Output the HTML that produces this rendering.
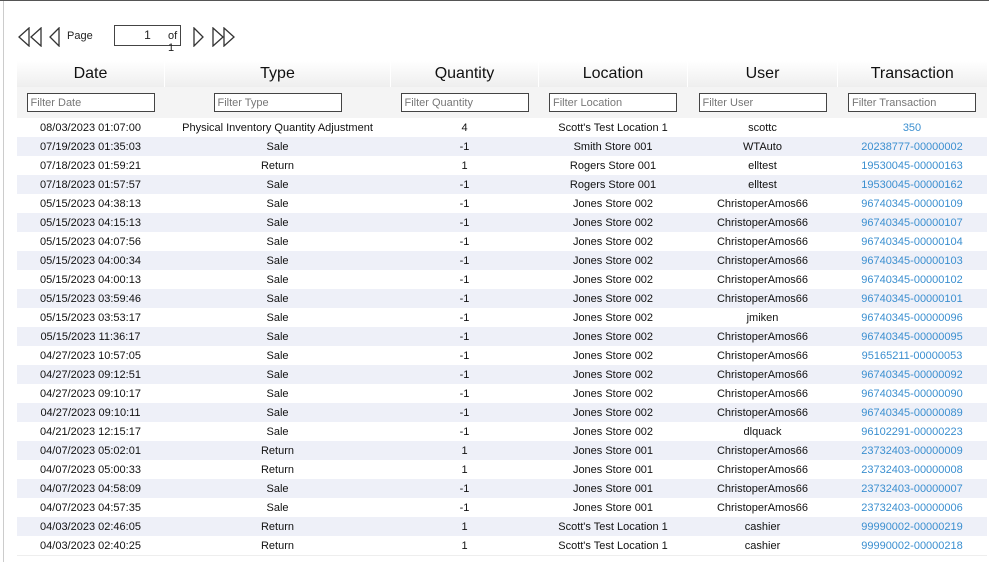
<!DOCTYPE html>
<html><head><style>
html,body{margin:0;padding:0;width:989px;height:562px;overflow:hidden;background:#fff;font-family:"Segoe UI","Liberation Sans",sans-serif;}
.topline{position:absolute;left:0;top:0;width:989px;height:1px;background:#555;}
.leftline{position:absolute;left:3px;top:1px;width:1px;height:561px;background:#ccc;}
.pager{position:absolute;left:18px;top:25px;height:22px;font-size:11px;color:#222;}
.pager svg{position:absolute;}
.pager .lbl{position:absolute;top:5px;}
.pager .box{position:absolute;left:96px;top:0;width:65px;height:19px;border:1px solid #444;text-align:center;font-size:12px;line-height:18px;}
table{position:absolute;left:16px;top:61px;width:970px;border-collapse:collapse;table-layout:fixed;font-size:11px;color:#111;}
th{font-weight:normal;font-size:16px;height:26px;padding:0;background:linear-gradient(#fff,#eee);border-left:1px solid #fff;}
tr.f td{height:31px;background:#f4f4f4;padding:0;text-align:center;}
.inp{display:inline-block;width:124px;height:19px;border:1px solid #444;background:#fff;text-align:left;font-size:11px;color:#777;line-height:19px;padding-left:3px;box-sizing:border-box;width:128px;}
td{text-align:center;height:19px;padding:0;white-space:nowrap;}
tbody tr.d:nth-child(odd) td{background:#eef0f8;}
td.t{color:#3b8fd0;}
tr.d:last-child td{border-bottom:1px solid #eee;}
</style></head><body>
<div class="topline"></div><div class="leftline"></div>
<div class="pager">
<svg style="left:0;top:2px" width="26" height="20" viewBox="0 0 26 20"><path d="M11 1 L1 10 L11 19 Z M23 1 L13 10 L23 19 Z" fill="none" stroke="#333" stroke-width="1.3"/></svg>
<svg style="left:30px;top:2px" width="14" height="20" viewBox="0 0 14 20"><path d="M11 1 L2 10 L11 19 Z" fill="none" stroke="#333" stroke-width="1.3"/></svg>
<span class="lbl" style="left:49px">Page</span>
<div class="box">1</div>
<span class="lbl" style="left:150px">of 1</span>
<svg style="left:174px;top:2px" width="14" height="20" viewBox="0 0 14 20"><path d="M2 1 L11 10 L2 19 Z" fill="none" stroke="#333" stroke-width="1.3"/></svg>
<svg style="left:193px;top:2px" width="26" height="20" viewBox="0 0 26 20"><path d="M2 1 L12 10 L2 19 Z M13 1 L23 10 L13 19 Z" fill="none" stroke="#333" stroke-width="1.3"/></svg>
</div>
<table>
<colgroup><col style="width:148px"><col style="width:226px"><col style="width:148px"><col style="width:149px"><col style="width:150px"><col style="width:149px"></colgroup>
<thead><tr><th>Date</th><th>Type</th><th>Quantity</th><th>Location</th><th>User</th><th>Transaction</th></tr></thead>
<tbody>
<tr class="f"><td><span class="inp">Filter Date</span></td><td><span class="inp">Filter Type</span></td><td><span class="inp">Filter Quantity</span></td><td><span class="inp">Filter Location</span></td><td><span class="inp">Filter User</span></td><td><span class="inp">Filter Transaction</span></td></tr>
<tr class="d"><td>08/03/2023 01:07:00</td><td>Physical Inventory Quantity Adjustment</td><td>4</td><td>Scott's Test Location 1</td><td>scottc</td><td class="t">350</td></tr>
<tr class="d"><td>07/19/2023 01:35:03</td><td>Sale</td><td>-1</td><td>Smith Store 001</td><td>WTAuto</td><td class="t">20238777-00000002</td></tr>
<tr class="d"><td>07/18/2023 01:59:21</td><td>Return</td><td>1</td><td>Rogers Store 001</td><td>elltest</td><td class="t">19530045-00000163</td></tr>
<tr class="d"><td>07/18/2023 01:57:57</td><td>Sale</td><td>-1</td><td>Rogers Store 001</td><td>elltest</td><td class="t">19530045-00000162</td></tr>
<tr class="d"><td>05/15/2023 04:38:13</td><td>Sale</td><td>-1</td><td>Jones Store 002</td><td>ChristoperAmos66</td><td class="t">96740345-00000109</td></tr>
<tr class="d"><td>05/15/2023 04:15:13</td><td>Sale</td><td>-1</td><td>Jones Store 002</td><td>ChristoperAmos66</td><td class="t">96740345-00000107</td></tr>
<tr class="d"><td>05/15/2023 04:07:56</td><td>Sale</td><td>-1</td><td>Jones Store 002</td><td>ChristoperAmos66</td><td class="t">96740345-00000104</td></tr>
<tr class="d"><td>05/15/2023 04:00:34</td><td>Sale</td><td>-1</td><td>Jones Store 002</td><td>ChristoperAmos66</td><td class="t">96740345-00000103</td></tr>
<tr class="d"><td>05/15/2023 04:00:13</td><td>Sale</td><td>-1</td><td>Jones Store 002</td><td>ChristoperAmos66</td><td class="t">96740345-00000102</td></tr>
<tr class="d"><td>05/15/2023 03:59:46</td><td>Sale</td><td>-1</td><td>Jones Store 002</td><td>ChristoperAmos66</td><td class="t">96740345-00000101</td></tr>
<tr class="d"><td>05/15/2023 03:53:17</td><td>Sale</td><td>-1</td><td>Jones Store 002</td><td>jmiken</td><td class="t">96740345-00000096</td></tr>
<tr class="d"><td>05/15/2023 11:36:17</td><td>Sale</td><td>-1</td><td>Jones Store 002</td><td>ChristoperAmos66</td><td class="t">96740345-00000095</td></tr>
<tr class="d"><td>04/27/2023 10:57:05</td><td>Sale</td><td>-1</td><td>Jones Store 002</td><td>ChristoperAmos66</td><td class="t">95165211-00000053</td></tr>
<tr class="d"><td>04/27/2023 09:12:51</td><td>Sale</td><td>-1</td><td>Jones Store 002</td><td>ChristoperAmos66</td><td class="t">96740345-00000092</td></tr>
<tr class="d"><td>04/27/2023 09:10:17</td><td>Sale</td><td>-1</td><td>Jones Store 002</td><td>ChristoperAmos66</td><td class="t">96740345-00000090</td></tr>
<tr class="d"><td>04/27/2023 09:10:11</td><td>Sale</td><td>-1</td><td>Jones Store 002</td><td>ChristoperAmos66</td><td class="t">96740345-00000089</td></tr>
<tr class="d"><td>04/21/2023 12:15:17</td><td>Sale</td><td>-1</td><td>Jones Store 002</td><td>dlquack</td><td class="t">96102291-00000223</td></tr>
<tr class="d"><td>04/07/2023 05:02:01</td><td>Return</td><td>1</td><td>Jones Store 001</td><td>ChristoperAmos66</td><td class="t">23732403-00000009</td></tr>
<tr class="d"><td>04/07/2023 05:00:33</td><td>Return</td><td>1</td><td>Jones Store 001</td><td>ChristoperAmos66</td><td class="t">23732403-00000008</td></tr>
<tr class="d"><td>04/07/2023 04:58:09</td><td>Sale</td><td>-1</td><td>Jones Store 001</td><td>ChristoperAmos66</td><td class="t">23732403-00000007</td></tr>
<tr class="d"><td>04/07/2023 04:57:35</td><td>Sale</td><td>-1</td><td>Jones Store 001</td><td>ChristoperAmos66</td><td class="t">23732403-00000006</td></tr>
<tr class="d"><td>04/03/2023 02:46:05</td><td>Return</td><td>1</td><td>Scott's Test Location 1</td><td>cashier</td><td class="t">99990002-00000219</td></tr>
<tr class="d"><td>04/03/2023 02:40:25</td><td>Return</td><td>1</td><td>Scott's Test Location 1</td><td>cashier</td><td class="t">99990002-00000218</td></tr>
</tbody></table>
</body></html>
